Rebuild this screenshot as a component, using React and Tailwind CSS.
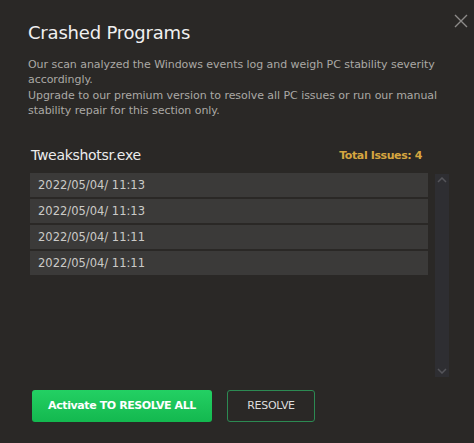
import React from "react";

const ROWS = ["2022/05/04/ 11:13", "2022/05/04/ 11:13", "2022/05/04/ 11:11", "2022/05/04/ 11:11"];

export default function App() {
  return (
    <div className="relative w-[474px] h-[443px] bg-[#2a2826] text-[#e6e6e6] overflow-hidden" style={{ fontFamily: '"DejaVu Sans", Verdana, sans-serif' }}>
      {/* close */}
      <button className="absolute right-[6px] top-[14px] w-[14px] h-[14px] text-[#8d8b89]">
        <svg viewBox="0 0 14 14" className="w-[14px] h-[14px]" stroke="currentColor" strokeWidth="1.4">
          <path d="M1 1 L13 13 M13 1 L1 13" />
        </svg>
      </button>

      <div className="pl-[28px] pr-[25px] pt-[20px]">
        <h1 className="text-[18px] leading-[26px] text-[#f0f0f0] tracking-[-0.2px]">Crashed Programs</h1>
        <div className="mt-[11px] text-[11px] leading-[15.3px] text-[#aaa8a5] tracking-[-0.05px] w-[410px]">
          <p>Our scan analyzed the Windows events log and weigh PC stability severity accordingly.</p>
          <p>Upgrade to our premium version to resolve all PC issues or run our manual stability repair for this section only.</p>
        </div>
      </div>

      <div className="flex items-end justify-between pl-[31px] pr-[52px] mt-[28px]">
        <span className="text-[14px] leading-[18px] text-[#ececec] tracking-[-0.3px]">Tweakshotsr.exe</span>
        <span className="text-[11px] leading-[16px] text-[#d6a640] font-bold tracking-[-0.4px]">Total Issues: 4</span>
      </div>

      <div className="flex gap-[7px] pl-[30px] mt-[9px]">
        <div className="w-[398px] flex flex-col gap-[2px]">
          {ROWS.map((r, i) => (
            <div key={i} className="h-[24px] bg-[#3b3a39] flex items-center pl-[8px] text-[11.5px] text-[#cbcac8] whitespace-pre">
              {r}
            </div>
          ))}
        </div>
        <div className="w-[14px] h-[203px] mt-[1px] bg-[#2e2e32] flex flex-col items-center justify-between py-[2px] text-[#55555a]">
          <svg viewBox="0 0 10 6" className="w-[10px] h-[6px] mt-[1px]" fill="none" stroke="currentColor" strokeWidth="1.5">
            <path d="M1 5 L5 1 L9 5" />
          </svg>
          <svg viewBox="0 0 10 6" className="w-[10px] h-[6px] mb-[1px]" fill="none" stroke="currentColor" strokeWidth="1.5">
            <path d="M1 1 L5 5 L9 1" />
          </svg>
        </div>
      </div>

      <div className="flex gap-[15px] pl-[32px] mt-[13px]">
        <button className="w-[180px] h-[32px] rounded-[3px] bg-gradient-to-b from-[#23d063] to-[#13b84f] text-white text-[11px] font-bold tracking-[-0.4px]">
          Activate TO RESOLVE ALL
        </button>
        <button className="w-[88px] h-[32px] rounded-[3px] border border-[#2c8a52] text-[#dcdcdc] text-[11px] tracking-[-0.3px]">
          RESOLVE
        </button>
      </div>
    </div>
  );
}
